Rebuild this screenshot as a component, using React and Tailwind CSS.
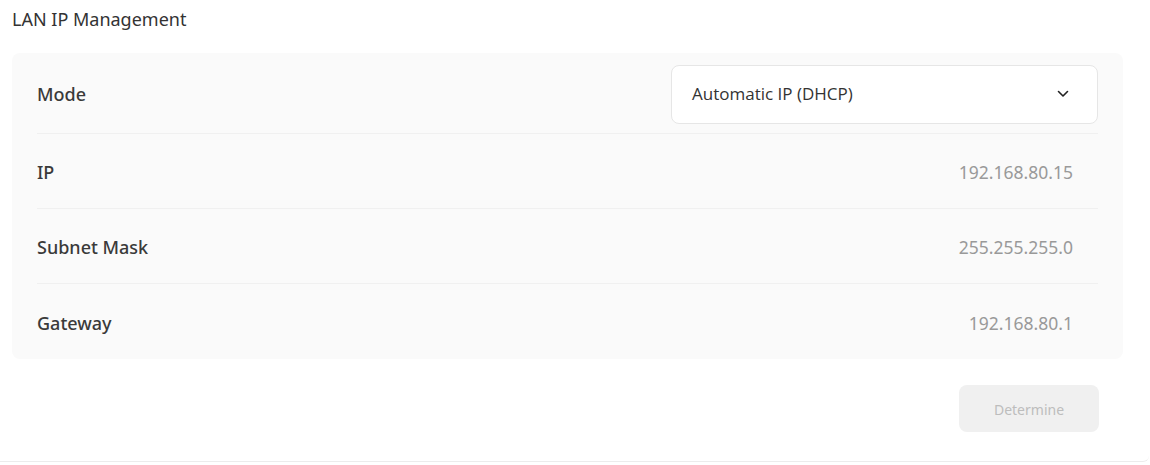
import React from "react";

const rows = [
  { label: "IP", value: "192.168.80.15" },
  { label: "Subnet Mask", value: "255.255.255.0" },
  { label: "Gateway", value: "192.168.80.1" },
];

function ChevronDown() {
  return (
    <svg width="14" height="14" viewBox="0 0 14 14" fill="none">
      <path d="M2.5 4.5L7 9l4.5-4.5" stroke="#222" strokeWidth="1.6" strokeLinecap="round" strokeLinejoin="round" />
    </svg>
  );
}

export default function App() {
  return (
    <div
      className="w-[1149px] h-[462px] bg-white border-b border-[#ececec] rounded-br-md"
      style={{ fontFamily: '"Noto Sans", "Open Sans", sans-serif' }}
    >
      <div className="px-3 pt-[6px] h-[53px] text-[18px] text-[#333]">LAN IP Management</div>

      <div className="mx-3 w-[1111px] bg-[#fafafa] rounded-lg px-[25px]">
        <div className="h-[81px] flex items-center justify-between border-b border-[#f0f0f0]">
          <span className="text-[18px] font-medium text-[#3a3a3a] pt-[3px]">Mode</span>
          <div className="w-[427px] h-[59px] bg-white border border-[#e6e6e6] rounded-lg flex items-center justify-between pl-[20px] pr-[27px] mt-[2px]">
            <span className="text-[17px] text-[#333]" style={{ fontFamily: '"Open Sans", "Noto Sans", sans-serif' }}>
              Automatic IP (DHCP)
            </span>
            <ChevronDown />
          </div>
        </div>
        {rows.map((r, i) => (
          <div
            key={r.label}
            className={`h-[75px] flex items-center justify-between ${i < rows.length - 1 ? "border-b border-[#f0f0f0]" : ""}`}
          >
            <span className="text-[18px] font-medium text-[#3a3a3a] pt-[3px]">{r.label}</span>
            <span className="text-[17.5px] text-[#999] pr-[25px] pt-[3px]">{r.value}</span>
          </div>
        ))}
      </div>

      <div className="flex justify-end pr-[50px] pt-[26px]">
        <button className="w-[140px] h-[47px] rounded-lg bg-[#f0f0f0] text-[14px] text-[#bdbdbd] pt-[2px]">
          Determine
        </button>
      </div>
    </div>
  );
}
